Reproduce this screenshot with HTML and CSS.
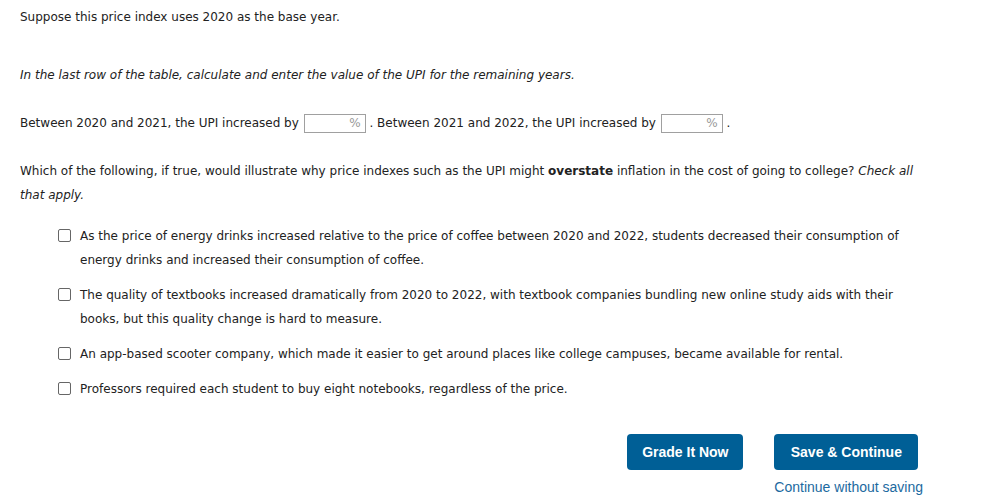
FILE: index.html
```html
<!DOCTYPE html>
<html>
<head>
<meta charset="utf-8">
<link rel="stylesheet" href="styles.css">
</head>
<body>
<div class="page">
  <p class="line first">Suppose this price index uses 2020 as the base year.</p>
  <p class="line instr"><em>In the last row of the table, calculate and enter the value of the UPI for the remaining years.</em></p>
  <p class="line fill">Between 2020 and 2021, the UPI increased by <span class="pct"><span class="pct-sign">%</span></span> . Between 2021 and 2022, the UPI increased by <span class="pct"><span class="pct-sign">%</span></span> .</p>
  <p class="line question">Which of the following, if true, would illustrate why price indexes such as the UPI might <strong>overstate</strong> inflation in the cost of going to college? <em>Check all</em> <em>that apply.</em></p>
  <ul class="options">
    <li class="option"><span class="box"></span><span class="opt-text">As the price of energy drinks increased relative to the price of coffee between 2020 and 2022, students decreased their consumption of energy drinks and increased their consumption of coffee.</span></li>
    <li class="option"><span class="box"></span><span class="opt-text">The quality of textbooks increased dramatically from 2020 to 2022, with textbook companies bundling new online study aids with their books, but this quality change is hard to measure.</span></li>
    <li class="option"><span class="box"></span><span class="opt-text">An app-based scooter company, which made it easier to get around places like college campuses, became available for rental.</span></li>
    <li class="option"><span class="box"></span><span class="opt-text">Professors required each student to buy eight notebooks, regardless of the price.</span></li>
  </ul>
  <div class="actions">
    <button class="btn grade">Grade It Now</button>
    <div class="save-col">
      <button class="btn save">Save &amp; Continue</button>
      <a class="skip" href="#">Continue without saving</a>
    </div>
  </div>
</div>
</body>
</html>
```

FILE: styles.css
```css
html, body {
  margin: 0;
  padding: 0;
  background: #fff;
}
.page {
  padding: 0 20px;
  font-family: "DejaVu Sans", Verdana, sans-serif;
  font-size: 12px;
  color: #222;
}
.line {
  margin: 0;
  line-height: 24px;
}
.first {
  padding-top: 5px;
}
.instr {
  margin-top: 34px;
}
.fill {
  margin-top: 24px;
}
.question {
  margin-top: 24px;
  padding-right: 60px;
}
.pct {
  display: inline-block;
  width: 60px;
  height: 17px;
  border: 1px solid #a0a0a0;
  vertical-align: middle;
  text-align: right;
  line-height: 17px;
  margin-left: 1px;
}
.pct-sign {
  color: #999;
  font-size: 12px;
  padding-right: 4px;
}
.options {
  list-style: none;
  margin: 17px 0 0;
  padding: 0 53px 0 38px;
}
.option {
  display: flex;
  align-items: flex-start;
  line-height: 24px;
  margin-bottom: 11px;
}
.box {
  flex: none;
  width: 11px;
  height: 11px;
  border: 1px solid #666;
  border-radius: 2px;
  margin: 5px 9px 0 0;
}
.actions {
  display: flex;
  justify-content: flex-end;
  gap: 31px;
  margin-top: 33px;
  padding-right: 55px;
}
.save-col {
  display: flex;
  flex-direction: column;
  align-items: flex-start;
}
.btn {
  height: 36px;
  border: none;
  border-radius: 4px;
  background: #005f96;
  color: #fff;
  font-family: "Liberation Sans", Arial, sans-serif;
  font-weight: bold;
  font-size: 14px;
  padding: 0;
  white-space: nowrap;
  cursor: pointer;
}
.grade {
  width: 116px;
}
.save {
  width: 144px;
}
.skip {
  margin-top: 9px;
  font-family: "Liberation Sans", Arial, sans-serif;
  font-size: 14px;
  color: #1c6aa0;
  text-decoration: none;
}
```
